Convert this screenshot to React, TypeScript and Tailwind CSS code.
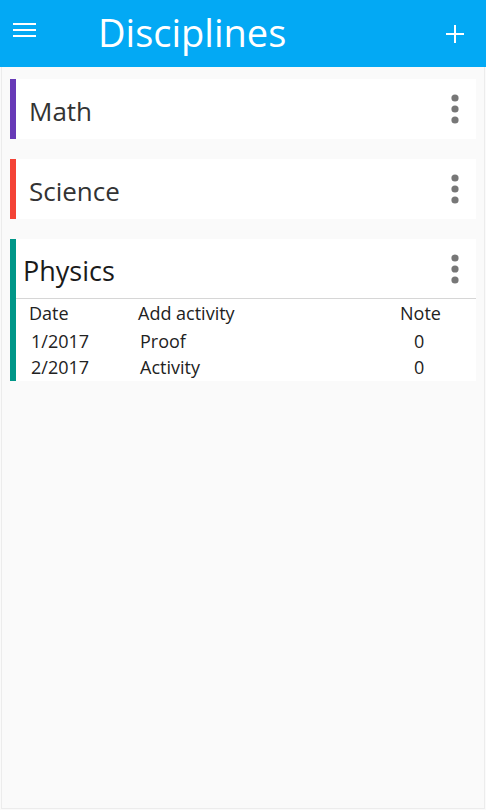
import React from "react";

const font = { fontFamily: '"Open Sans", "Noto Sans", sans-serif' };

function Dots() {
  return (
    <svg width="8" height="30" viewBox="0 0 8 30" className="block">
      <circle cx="4" cy="4" r="3.6" fill="#777777" />
      <circle cx="4" cy="15" r="3.6" fill="#777777" />
      <circle cx="4" cy="26" r="3.6" fill="#777777" />
    </svg>
  );
}

function Card({ name, color }: { name: string; color: string }) {
  return (
    <div className="flex h-[60px] bg-white">
      <div className={`w-[6px] ${color}`} />
      <div className="flex flex-1 items-center justify-between pl-[13px] pr-[17px]">
        <span className="pt-[4px] text-[26px] text-[#333333]">{name}</span>
        <Dots />
      </div>
    </div>
  );
}

const rows = [
  { date: "1/2017", act: "Proof", note: "0" },
  { date: "2/2017", act: "Activity", note: "0" },
];

export default function App() {
  return (
    <div style={font} className="flex h-[810px] w-[486px] flex-col bg-[#fafafa]">
      <header className="flex h-[67px] shrink-0 items-center bg-[#03a9f4] pb-[5px] pt-px">
        <div className="pb-[4px] pl-[13px]">
          <svg width="23" height="16" viewBox="0 0 23 16" className="block">
            <rect x="0" y="1" width="23" height="2" fill="#fff" />
            <rect x="0" y="7" width="23" height="2" fill="#fff" />
            <rect x="0" y="13" width="23" height="2" fill="#fff" />
          </svg>
        </div>
        <h1 className="ml-[62px] flex-1 text-[38px] leading-none text-white">Disciplines</h1>
        <div className="pr-[22px] pt-[4px]">
          <svg width="18" height="18" viewBox="0 0 18 18" className="block">
            <rect x="0" y="8" width="18" height="2" fill="#fff" />
            <rect x="8" y="0" width="2" height="18" fill="#fff" />
          </svg>
        </div>
      </header>
      <main className="mx-px mb-px flex flex-1 flex-col gap-[20px] border-x border-b border-[#ececec] px-[8px] pt-[12px]">
        <Card name="Math" color="bg-[#673ab7]" />
        <Card name="Science" color="bg-[#f44336]" />
        <div className="flex bg-white">
          <div className="w-[6px] bg-[#009688]" />
          <div className="flex flex-1 flex-col">
            <div className="flex h-[60px] items-center justify-between border-b border-[#d6d6d6] pl-[7px] pr-[17px]">
              <span className="pt-[5px] text-[27px] text-[#1a1a1a]">Physics</span>
              <Dots />
            </div>
            <div className="grid h-[29px] grid-cols-[109px_262px_1fr] items-center pl-[13px] text-[18px] text-[#222222]">
              <span>Date</span>
              <span>Add activity</span>
              <span>Note</span>
            </div>
            {rows.map((r) => (
              <div
                key={r.date}
                className="grid h-[26px] grid-cols-[109px_274px_1fr] items-center pl-[15px] text-[18px] text-[#222222]"
              >
                <span>{r.date}</span>
                <span>{r.act}</span>
                <span>{r.note}</span>
              </div>
            ))}
            <div className="h-px" />
          </div>
        </div>
      </main>
    </div>
  );
}
